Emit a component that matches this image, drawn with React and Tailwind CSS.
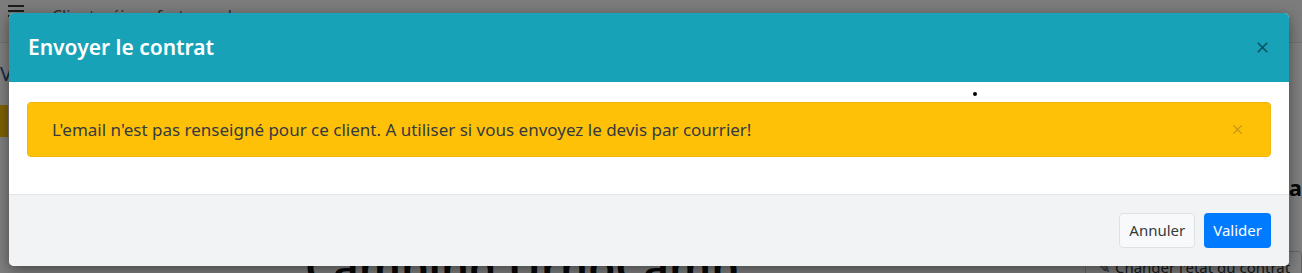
import { X } from "lucide-react";

const font = { fontFamily: '"Noto Sans", "Open Sans", Arial, sans-serif' };

const BackgroundPage = () => (
  <div className="flex h-full w-full flex-col bg-white" style={font}>
    <div className="flex h-[43px] items-start gap-7 border-b border-[#dee2e6] bg-[#f8f9fa] px-2 pt-1">
      <div className="flex w-4 flex-col gap-[3px] pt-[1px]">
        <span className="h-[2px] w-4 bg-[#343a40]" />
        <span className="h-[2px] w-4 bg-[#343a40]" />
        <span className="h-[2px] w-4 bg-[#343a40]" />
      </div>
      <span className="text-[16px] text-[#555]">Client, séjour, facture, plaque</span>
    </div>
    <div className="flex flex-1">
      <div className="flex w-[305px] flex-col">
        <span className="mt-4 text-[20px] text-[#1f4f8f]">Voir</span>
        <div className="mt-4 h-8 w-2 bg-[#ffc107]" />
      </div>
      <div className="flex flex-1 flex-col justify-end">
        <span className="translate-y-[26px] text-[44px] font-semibold text-[#111]">Camping UrnoCamp</span>
      </div>
      <div className="flex w-[217px] flex-col justify-end">
        <span className="mb-auto mt-[128px] self-end text-[22px] font-bold text-[#111]">Ca</span>
        <div className="translate-y-[10px] whitespace-nowrap rounded border border-[#ccc] px-3 py-1 text-[15px] text-[#333]">
          ✎ Changer l'état du contrat
        </div>
      </div>
    </div>
  </div>
);

export default function App() {
  return (
    <div className="relative h-[273px] w-[1302px] overflow-hidden" style={font}>
      <BackgroundPage />
      <div className="absolute inset-0 bg-black/50" />
      <div className="absolute left-[9px] top-[13px] flex h-[253px] w-[1280px] flex-col overflow-hidden rounded-[5px] bg-white shadow-[0_4px_14px_rgba(0,0,0,0.45)]">
        <div className="flex h-[69px] items-center justify-between bg-[#17a2b8] pl-[19px] pr-[18px]">
          <h1 className="text-[21px] font-semibold text-white">Envoyer le contrat</h1>
          <X className="h-[17px] w-[17px] text-[#0b5360]" strokeWidth={2.4} />
        </div>
        <div className="relative flex-1 px-[18px] pt-[20px]">
          <span className="absolute left-[964px] top-[10px] h-[4px] w-[4px] rounded-full bg-black" />
          <div className="flex h-[55px] items-center justify-between rounded-[4px] border border-[#f0b70a] bg-[#ffc107] pl-[24px] pr-[25px]">
            <p className="text-[17px] text-[#343a40]">
              L'email n'est pas renseigné pour ce client. A utiliser si vous envoyez le devis par courrier!
            </p>
            <X className="h-[15px] w-[15px] text-[#c79a14]" strokeWidth={2} />
          </div>
        </div>
        <div className="flex h-[72px] items-center justify-end gap-[9px] border-t border-[#e3e6ea] bg-[#f2f3f5] px-[18px]">
          <button className="h-[35px] rounded-[4px] border border-[#dee2e6] bg-[#f8f9fa] px-[9px] text-[15px] text-[#343a40]">
            Annuler
          </button>
          <button className="h-[35px] rounded-[4px] bg-[#007bff] px-[9px] text-[15px] text-white">
            Valider
          </button>
        </div>
      </div>
    </div>
  );
}
